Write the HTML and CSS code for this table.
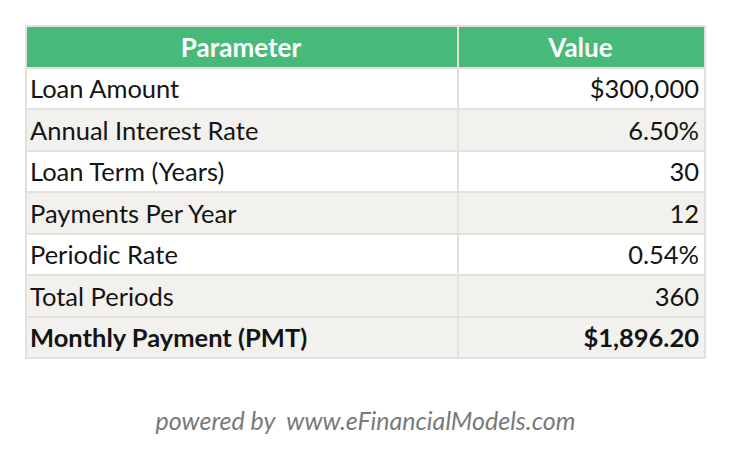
FILE: index.html
```html
<!DOCTYPE html>
<html>
<head>
<meta charset="utf-8">
<link rel="stylesheet" href="styles.css">
</head>
<body>
<div class="page">
  <table class="pmt">
    <thead>
      <tr><th class="c-param">Parameter</th><th class="c-val">Value</th></tr>
    </thead>
    <tbody>
      <tr><td>Loan Amount</td><td class="num">$300,000</td></tr>
      <tr class="alt"><td>Annual Interest Rate</td><td class="num">6.50%</td></tr>
      <tr><td>Loan Term (Years)</td><td class="num">30</td></tr>
      <tr class="alt"><td>Payments Per Year</td><td class="num">12</td></tr>
      <tr><td>Periodic Rate</td><td class="num">0.54%</td></tr>
      <tr class="alt"><td>Total Periods</td><td class="num">360</td></tr>
      <tr class="total"><td>Monthly Payment (PMT)</td><td class="num">$1,896.20</td></tr>
    </tbody>
  </table>
  <p class="credit">powered by&nbsp; www.eFinancialModels.com</p>
</div>
</body>
</html>
```
FILE: styles.css
```css
html, body {
  margin: 0;
  padding: 0;
  background: #ffffff;
}
.page {
  padding: 25px 0 0 25px;
  font-family: Lato, "Open Sans", sans-serif;
}
.pmt {
  border-collapse: collapse;
  width: 681px;
  table-layout: fixed;
  font-size: 25.5px;
  color: #141414;
}
.pmt th, .pmt td {
  border: 2px solid #e4e1dc;
  height: 41px;
  padding: 0 5px 0 3px;
  box-sizing: border-box;
  line-height: 37px;
  white-space: nowrap;
}
.pmt th {
  height: 42px;
  background: #47ba79;
  color: #ffffff;
  font-weight: 700;
  text-align: center;
  font-size: 26px;
}
.pmt tbody tr:nth-child(even) td { height: 42px; }
.c-param { width: 432px; }
.pmt td.num { text-align: right; }
.pmt tr.alt td { background: #f2f1ee; }
.pmt tr.total td {
  background: #f2f1ee;
  font-weight: 700;
}
.credit {
  margin: 46px 0 0 0;
  width: 681px;
  text-align: center;
  font-style: italic;
  font-size: 25px;
  line-height: 30px;
  color: #7a7a7a;
}
```
